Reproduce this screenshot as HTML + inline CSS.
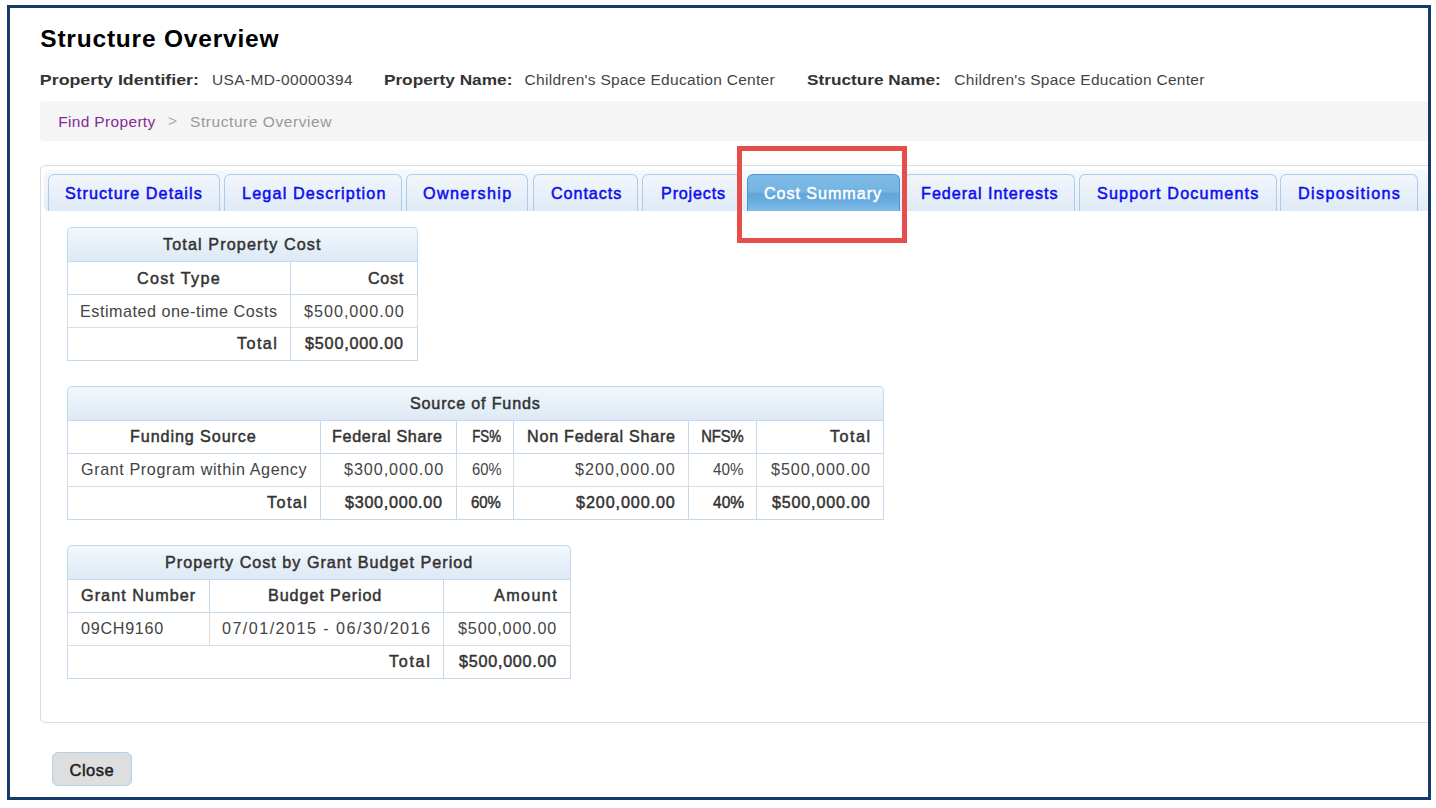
<!DOCTYPE html>
<html><head><meta charset="utf-8"><title>Structure Overview</title>
<style>
html,body{margin:0;padding:0;background:#fff}
body{width:1436px;height:808px;overflow:hidden;position:relative;font-family:"Liberation Sans",sans-serif}
#clip{position:absolute;left:0;top:0;width:1428px;height:797px;overflow:hidden}
.t{position:absolute;white-space:nowrap;line-height:24px;font-family:"Liberation Sans",sans-serif}
#frame{position:absolute;left:7px;top:5px;width:1424px;height:795px;box-sizing:border-box;border:3px solid #163a6b}
#red{position:absolute;left:737px;top:146px;width:170px;height:97px;box-sizing:border-box;border:5px solid #e54e4a}
</style></head><body>
<div id="clip">
<div style="position:absolute;left:40px;top:101px;width:1420px;height:40px;background:#f5f5f5;border-radius:4px"></div>
<div style="position:absolute;left:40px;top:165px;width:1420px;height:558px;box-sizing:border-box;border:1px solid #dddddd;border-radius:5px;background:#fff"></div>
<div style="position:absolute;left:44px;top:170px;width:1420px;height:41px;background:linear-gradient(to bottom,#f6f9fc 0%,#e3edf7 100%);border-radius:4px 0 0 4px"></div>
<div style="position:absolute;left:48px;top:174px;width:172px;height:37px;box-sizing:border-box;border:1px solid #adcbe7;border-bottom:none;border-radius:6px 6px 0 0;background:linear-gradient(to bottom,#f1f6fb 0%,#dfeaf5 100%)"></div>
<div style="position:absolute;left:224px;top:174px;width:178px;height:37px;box-sizing:border-box;border:1px solid #adcbe7;border-bottom:none;border-radius:6px 6px 0 0;background:linear-gradient(to bottom,#f1f6fb 0%,#dfeaf5 100%)"></div>
<div style="position:absolute;left:406px;top:174px;width:122px;height:37px;box-sizing:border-box;border:1px solid #adcbe7;border-bottom:none;border-radius:6px 6px 0 0;background:linear-gradient(to bottom,#f1f6fb 0%,#dfeaf5 100%)"></div>
<div style="position:absolute;left:533px;top:174px;width:105px;height:37px;box-sizing:border-box;border:1px solid #adcbe7;border-bottom:none;border-radius:6px 6px 0 0;background:linear-gradient(to bottom,#f1f6fb 0%,#dfeaf5 100%)"></div>
<div style="position:absolute;left:642px;top:174px;width:100px;height:37px;box-sizing:border-box;border:1px solid #adcbe7;border-bottom:none;border-radius:6px 6px 0 0;background:linear-gradient(to bottom,#f1f6fb 0%,#dfeaf5 100%)"></div>
<div style="position:absolute;left:747px;top:174px;width:153px;height:37px;box-sizing:border-box;border:1px solid #4e96d8;border-bottom:none;border-radius:6px 6px 0 0;background:linear-gradient(to bottom,#7fbbe7 0%,#74b3e2 48%,#5fa6dc 50%,#6aaddf 75%,#80bde8 100%)"></div>
<div style="position:absolute;left:904px;top:174px;width:171px;height:37px;box-sizing:border-box;border:1px solid #adcbe7;border-bottom:none;border-radius:6px 6px 0 0;background:linear-gradient(to bottom,#f1f6fb 0%,#dfeaf5 100%)"></div>
<div style="position:absolute;left:1079px;top:174px;width:198px;height:37px;box-sizing:border-box;border:1px solid #adcbe7;border-bottom:none;border-radius:6px 6px 0 0;background:linear-gradient(to bottom,#f1f6fb 0%,#dfeaf5 100%)"></div>
<div style="position:absolute;left:1280px;top:174px;width:138px;height:37px;box-sizing:border-box;border:1px solid #adcbe7;border-bottom:none;border-radius:6px 6px 0 0;background:linear-gradient(to bottom,#f1f6fb 0%,#dfeaf5 100%)"></div>
<div style="position:absolute;left:67px;top:227px;width:351px;height:34px;box-sizing:border-box;border:1px solid #c3d9ee;border-bottom:none;border-radius:5px 5px 0 0;background:linear-gradient(to bottom,#f4f8fc 0%,#e9f1f9 45%,#dde9f5 100%)"></div>
<div style="position:absolute;left:67px;top:261px;width:351px;height:1px;background:#c3d9ee"></div>
<div style="position:absolute;left:67px;top:261px;width:1px;height:34px;background:#c3d9ee"></div>
<div style="position:absolute;left:290px;top:261px;width:1px;height:34px;background:#c3d9ee"></div>
<div style="position:absolute;left:417px;top:261px;width:1px;height:34px;background:#c3d9ee"></div>
<div style="position:absolute;left:67px;top:294px;width:351px;height:1px;background:#c3d9ee"></div>
<div style="position:absolute;left:67px;top:295px;width:1px;height:33px;background:#dddddd"></div>
<div style="position:absolute;left:290px;top:295px;width:1px;height:33px;background:#dddddd"></div>
<div style="position:absolute;left:417px;top:295px;width:1px;height:33px;background:#dddddd"></div>
<div style="position:absolute;left:67px;top:327px;width:351px;height:1px;background:#dddddd"></div>
<div style="position:absolute;left:67px;top:328px;width:1px;height:33px;background:#c3d9ee"></div>
<div style="position:absolute;left:290px;top:328px;width:1px;height:33px;background:#c3d9ee"></div>
<div style="position:absolute;left:417px;top:328px;width:1px;height:33px;background:#c3d9ee"></div>
<div style="position:absolute;left:67px;top:360px;width:351px;height:1px;background:#c3d9ee"></div>
<div style="position:absolute;left:67px;top:386px;width:817px;height:34px;box-sizing:border-box;border:1px solid #c3d9ee;border-bottom:none;border-radius:5px 5px 0 0;background:linear-gradient(to bottom,#f4f8fc 0%,#e9f1f9 45%,#dde9f5 100%)"></div>
<div style="position:absolute;left:67px;top:420px;width:817px;height:1px;background:#c3d9ee"></div>
<div style="position:absolute;left:67px;top:420px;width:1px;height:34px;background:#c3d9ee"></div>
<div style="position:absolute;left:320px;top:420px;width:1px;height:34px;background:#c3d9ee"></div>
<div style="position:absolute;left:456px;top:420px;width:1px;height:34px;background:#c3d9ee"></div>
<div style="position:absolute;left:513px;top:420px;width:1px;height:34px;background:#c3d9ee"></div>
<div style="position:absolute;left:688px;top:420px;width:1px;height:34px;background:#c3d9ee"></div>
<div style="position:absolute;left:756px;top:420px;width:1px;height:34px;background:#c3d9ee"></div>
<div style="position:absolute;left:883px;top:420px;width:1px;height:34px;background:#c3d9ee"></div>
<div style="position:absolute;left:67px;top:453px;width:817px;height:1px;background:#c3d9ee"></div>
<div style="position:absolute;left:67px;top:454px;width:1px;height:33px;background:#dddddd"></div>
<div style="position:absolute;left:320px;top:454px;width:1px;height:33px;background:#dddddd"></div>
<div style="position:absolute;left:456px;top:454px;width:1px;height:33px;background:#dddddd"></div>
<div style="position:absolute;left:513px;top:454px;width:1px;height:33px;background:#dddddd"></div>
<div style="position:absolute;left:688px;top:454px;width:1px;height:33px;background:#dddddd"></div>
<div style="position:absolute;left:756px;top:454px;width:1px;height:33px;background:#dddddd"></div>
<div style="position:absolute;left:883px;top:454px;width:1px;height:33px;background:#dddddd"></div>
<div style="position:absolute;left:67px;top:486px;width:817px;height:1px;background:#dddddd"></div>
<div style="position:absolute;left:67px;top:487px;width:1px;height:33px;background:#c3d9ee"></div>
<div style="position:absolute;left:320px;top:487px;width:1px;height:33px;background:#c3d9ee"></div>
<div style="position:absolute;left:456px;top:487px;width:1px;height:33px;background:#c3d9ee"></div>
<div style="position:absolute;left:513px;top:487px;width:1px;height:33px;background:#c3d9ee"></div>
<div style="position:absolute;left:688px;top:487px;width:1px;height:33px;background:#c3d9ee"></div>
<div style="position:absolute;left:756px;top:487px;width:1px;height:33px;background:#c3d9ee"></div>
<div style="position:absolute;left:883px;top:487px;width:1px;height:33px;background:#c3d9ee"></div>
<div style="position:absolute;left:67px;top:519px;width:817px;height:1px;background:#c3d9ee"></div>
<div style="position:absolute;left:67px;top:545px;width:504px;height:34px;box-sizing:border-box;border:1px solid #c3d9ee;border-bottom:none;border-radius:5px 5px 0 0;background:linear-gradient(to bottom,#f4f8fc 0%,#e9f1f9 45%,#dde9f5 100%)"></div>
<div style="position:absolute;left:67px;top:579px;width:504px;height:1px;background:#c3d9ee"></div>
<div style="position:absolute;left:67px;top:579px;width:1px;height:34px;background:#c3d9ee"></div>
<div style="position:absolute;left:209px;top:579px;width:1px;height:34px;background:#c3d9ee"></div>
<div style="position:absolute;left:443px;top:579px;width:1px;height:34px;background:#c3d9ee"></div>
<div style="position:absolute;left:570px;top:579px;width:1px;height:34px;background:#c3d9ee"></div>
<div style="position:absolute;left:67px;top:612px;width:504px;height:1px;background:#c3d9ee"></div>
<div style="position:absolute;left:67px;top:613px;width:1px;height:33px;background:#dddddd"></div>
<div style="position:absolute;left:209px;top:613px;width:1px;height:33px;background:#dddddd"></div>
<div style="position:absolute;left:443px;top:613px;width:1px;height:33px;background:#dddddd"></div>
<div style="position:absolute;left:570px;top:613px;width:1px;height:33px;background:#dddddd"></div>
<div style="position:absolute;left:67px;top:645px;width:504px;height:1px;background:#dddddd"></div>
<div style="position:absolute;left:67px;top:646px;width:1px;height:33px;background:#c3d9ee"></div>
<div style="position:absolute;left:443px;top:646px;width:1px;height:33px;background:#c3d9ee"></div>
<div style="position:absolute;left:570px;top:646px;width:1px;height:33px;background:#c3d9ee"></div>
<div style="position:absolute;left:67px;top:678px;width:504px;height:1px;background:#c3d9ee"></div>
<div style="position:absolute;left:52px;top:752px;width:80px;height:34px;box-sizing:border-box;border:1px solid #b4d0e8;border-radius:6px;background:#dedede"></div>
<div class="t" id="t0" style="left:40.28px;top:27px;font-size:24.5px;letter-spacing:0.798px;color:#000;font-weight:bold">Structure Overview</div>
<div class="t" id="t1" style="left:40.46px;top:68px;font-size:15.5px;letter-spacing:0.000px;color:#333;transform:scaleX(1.1471);transform-origin:1.00px 0;font-weight:bold">Property Identifier:</div>
<div class="t" id="t2" style="left:212.00px;top:68px;font-size:15.5px;letter-spacing:0.381px;color:#444444">USA-MD-00000394</div>
<div class="t" id="t3" style="left:384.42px;top:68px;font-size:15.5px;letter-spacing:0.000px;color:#333;transform:scaleX(1.1133);transform-origin:1.00px 0;font-weight:bold">Property Name:</div>
<div class="t" id="t4" style="left:524.54px;top:68px;font-size:15.5px;letter-spacing:0.292px;color:#444444">Children's Space Education Center</div>
<div class="t" id="t5" style="left:806.52px;top:68px;font-size:15.5px;letter-spacing:0.000px;color:#333;transform:scaleX(1.1098);transform-origin:0.00px 0;font-weight:bold">Structure Name:</div>
<div class="t" id="t6" style="left:954.26px;top:68px;font-size:15.5px;letter-spacing:0.294px;color:#444444">Children's Space Education Center</div>
<div class="t" id="t7" style="left:58.22px;top:110px;font-size:15.5px;letter-spacing:0.334px;color:#862a96">Find Property</div>
<div class="t" id="t8" style="left:168.00px;top:109px;font-size:15.5px;letter-spacing:0.000px;color:#aaa">&gt;</div>
<div class="t" id="t9" style="left:190.04px;top:110px;font-size:15.5px;letter-spacing:0.563px;color:#999">Structure Overview</div>
<div class="t" id="t10" style="left:65.00px;top:182px;font-size:17px;letter-spacing:1.143px;color:#0c0cee;transform:scaleX(0.9500);transform-origin:0.00px 0;-webkit-text-stroke:0.5px #0c0cee">Structure Details</div>
<div class="t" id="t11" style="left:241.66px;top:182px;font-size:17px;letter-spacing:1.227px;color:#0c0cee;transform:scaleX(0.9500);transform-origin:1.00px 0;-webkit-text-stroke:0.5px #0c0cee">Legal Description</div>
<div class="t" id="t12" style="left:423.24px;top:182px;font-size:17px;letter-spacing:1.452px;color:#0c0cee;transform:scaleX(0.9500);transform-origin:0.00px 0;-webkit-text-stroke:0.5px #0c0cee">Ownership</div>
<div class="t" id="t13" style="left:550.74px;top:182px;font-size:17px;letter-spacing:0.981px;color:#0c0cee;transform:scaleX(0.9500);transform-origin:0.00px 0;-webkit-text-stroke:0.5px #0c0cee">Contacts</div>
<div class="t" id="t14" style="left:660.68px;top:182px;font-size:17px;letter-spacing:0.855px;color:#0c0cee;transform:scaleX(0.9500);transform-origin:1.00px 0;-webkit-text-stroke:0.5px #0c0cee">Projects</div>
<div class="t" id="t15" style="left:764.02px;top:182px;font-size:17px;letter-spacing:0.981px;color:#fff;transform:scaleX(0.9500);transform-origin:0.00px 0;-webkit-text-stroke:0.5px #fff">Cost Summary</div>
<div class="t" id="t16" style="left:921.18px;top:182px;font-size:17px;letter-spacing:1.011px;color:#0c0cee;transform:scaleX(0.9500);transform-origin:1.00px 0;-webkit-text-stroke:0.5px #0c0cee">Federal Interests</div>
<div class="t" id="t17" style="left:1096.98px;top:182px;font-size:17px;letter-spacing:1.221px;color:#0c0cee;transform:scaleX(0.9500);transform-origin:0.00px 0;-webkit-text-stroke:0.5px #0c0cee">Support Documents</div>
<div class="t" id="t18" style="left:1297.92px;top:182px;font-size:17px;letter-spacing:1.410px;color:#0c0cee;transform:scaleX(0.9500);transform-origin:1.00px 0;-webkit-text-stroke:0.5px #0c0cee">Dispositions</div>
<div class="t" id="t19" style="left:163.00px;top:233px;font-size:17px;letter-spacing:1.182px;color:#333333;transform:scaleX(0.9500);transform-origin:0.00px 0;-webkit-text-stroke:0.5px #333333">Total Property Cost</div>
<div class="t" id="t20" style="left:137.02px;top:267px;font-size:17px;letter-spacing:1.345px;color:#333333;transform:scaleX(0.9500);transform-origin:0.00px 0;-webkit-text-stroke:0.5px #333333">Cost Type</div>
<div class="t" id="t21" style="left:367.76px;top:267px;font-size:17px;letter-spacing:0.726px;color:#333333;transform:scaleX(0.9500);transform-origin:0.00px 0;-webkit-text-stroke:0.5px #333333">Cost</div>
<div class="t" id="t22" style="left:79.74px;top:300px;font-size:17px;letter-spacing:0.551px;color:#444444;transform:scaleX(0.9500);transform-origin:1.00px 0">Estimated one-time Costs</div>
<div class="t" id="t23" style="left:304.02px;top:300px;font-size:17px;letter-spacing:1.042px;color:#444444;transform:scaleX(0.9500);transform-origin:0.00px 0">$500,000.00</div>
<div class="t" id="t24" style="left:236.50px;top:332px;font-size:17px;letter-spacing:1.496px;color:#333333;transform:scaleX(0.9500);transform-origin:0.00px 0;-webkit-text-stroke:0.5px #333333">Total</div>
<div class="t" id="t25" style="left:305.02px;top:332px;font-size:17px;letter-spacing:0.863px;color:#333333;transform:scaleX(0.9500);transform-origin:0.00px 0;-webkit-text-stroke:0.5px #333333">$500,000.00</div>
<div class="t" id="t26" style="left:409.50px;top:392px;font-size:17px;letter-spacing:0.849px;color:#333333;transform:scaleX(0.9500);transform-origin:0.00px 0;-webkit-text-stroke:0.5px #333333">Source of Funds</div>
<div class="t" id="t27" style="left:130.44px;top:425px;font-size:17px;letter-spacing:0.949px;color:#333333;transform:scaleX(0.9500);transform-origin:1.00px 0;-webkit-text-stroke:0.5px #333333">Funding Source</div>
<div class="t" id="t28" style="left:332.44px;top:425px;font-size:17px;letter-spacing:0.670px;color:#333333;transform:scaleX(0.9500);transform-origin:1.00px 0;-webkit-text-stroke:0.5px #333333">Federal Share</div>
<div class="t" id="t29" style="left:471.92px;top:425px;font-size:17px;letter-spacing:0.000px;color:#333333;transform:scaleX(0.7855);transform-origin:1.00px 0;-webkit-text-stroke:0.5px #333333">FS%</div>
<div class="t" id="t30" style="left:526.70px;top:425px;font-size:17px;letter-spacing:0.760px;color:#333333;transform:scaleX(0.9500);transform-origin:1.00px 0;-webkit-text-stroke:0.5px #333333">Non Federal Share</div>
<div class="t" id="t31" style="left:700.70px;top:425px;font-size:17px;letter-spacing:0.000px;color:#333333;transform:scaleX(0.8667);transform-origin:1.00px 0;-webkit-text-stroke:0.5px #333333">NFS%</div>
<div class="t" id="t32" style="left:829.52px;top:425px;font-size:17px;letter-spacing:1.559px;color:#333333;transform:scaleX(0.9500);transform-origin:0.00px 0;-webkit-text-stroke:0.5px #333333">Total</div>
<div class="t" id="t33" style="left:80.50px;top:458px;font-size:17px;letter-spacing:0.629px;color:#444444;transform:scaleX(0.9500);transform-origin:0.00px 0">Grant Program within Agency</div>
<div class="t" id="t34" style="left:343.98px;top:458px;font-size:17px;letter-spacing:0.987px;color:#444444;transform:scaleX(0.9500);transform-origin:0.00px 0">$300,000.00</div>
<div class="t" id="t35" style="left:471.50px;top:458px;font-size:17px;letter-spacing:0.000px;color:#444444;transform:scaleX(0.8700);transform-origin:0.00px 0">60%</div>
<div class="t" id="t36" style="left:575.02px;top:458px;font-size:17px;letter-spacing:1.044px;color:#444444;transform:scaleX(0.9500);transform-origin:0.00px 0">$200,000.00</div>
<div class="t" id="t37" style="left:713.02px;top:458px;font-size:17px;letter-spacing:0.000px;color:#444444;transform:scaleX(0.8930);transform-origin:0.00px 0">40%</div>
<div class="t" id="t38" style="left:770.98px;top:458px;font-size:17px;letter-spacing:0.964px;color:#444444;transform:scaleX(0.9500);transform-origin:0.00px 0">$500,000.00</div>
<div class="t" id="t39" style="left:266.98px;top:491px;font-size:17px;letter-spacing:1.496px;color:#333333;transform:scaleX(0.9500);transform-origin:0.00px 0;-webkit-text-stroke:0.5px #333333">Total</div>
<div class="t" id="t40" style="left:345.48px;top:491px;font-size:17px;letter-spacing:0.756px;color:#333333;transform:scaleX(0.9500);transform-origin:0.00px 0;-webkit-text-stroke:0.5px #333333">$300,000.00</div>
<div class="t" id="t41" style="left:470.50px;top:491px;font-size:17px;letter-spacing:0.000px;color:#333333;transform:scaleX(0.8782);transform-origin:0.00px 0;-webkit-text-stroke:0.5px #333333">60%</div>
<div class="t" id="t42" style="left:576.00px;top:491px;font-size:17px;letter-spacing:0.941px;color:#333333;transform:scaleX(0.9500);transform-origin:0.00px 0;-webkit-text-stroke:0.5px #333333">$200,000.00</div>
<div class="t" id="t43" style="left:713.00px;top:491px;font-size:17px;letter-spacing:0.000px;color:#333333;transform:scaleX(0.9142);transform-origin:0.00px 0;-webkit-text-stroke:0.5px #333333">40%</div>
<div class="t" id="t44" style="left:771.50px;top:491px;font-size:17px;letter-spacing:0.836px;color:#333333;transform:scaleX(0.9500);transform-origin:0.00px 0;-webkit-text-stroke:0.5px #333333">$500,000.00</div>
<div class="t" id="t45" style="left:164.70px;top:551px;font-size:17px;letter-spacing:1.059px;color:#333333;transform:scaleX(0.9500);transform-origin:1.00px 0;-webkit-text-stroke:0.5px #333333">Property Cost by Grant Budget Period</div>
<div class="t" id="t46" style="left:80.74px;top:584px;font-size:17px;letter-spacing:1.135px;color:#333333;transform:scaleX(0.9500);transform-origin:0.00px 0;-webkit-text-stroke:0.5px #333333">Grant Number</div>
<div class="t" id="t47" style="left:268.46px;top:584px;font-size:17px;letter-spacing:0.955px;color:#333333;transform:scaleX(0.9500);transform-origin:1.00px 0;-webkit-text-stroke:0.5px #333333">Budget Period</div>
<div class="t" id="t48" style="left:493.50px;top:584px;font-size:17px;letter-spacing:1.495px;color:#333333;transform:scaleX(0.9500);transform-origin:0.00px 0;-webkit-text-stroke:0.5px #333333">Amount</div>
<div class="t" id="t49" style="left:80.74px;top:617px;font-size:17px;letter-spacing:0.748px;color:#444444;transform:scaleX(0.9500);transform-origin:0.00px 0">09CH9160</div>
<div class="t" id="t50" style="left:221.76px;top:617px;font-size:17px;letter-spacing:1.527px;color:#444444;transform:scaleX(0.9500);transform-origin:0.00px 0">07/01/2015 - 06/30/2016</div>
<div class="t" id="t51" style="left:458.02px;top:617px;font-size:17px;letter-spacing:0.886px;color:#444444;transform:scaleX(0.9500);transform-origin:0.00px 0">$500,000.00</div>
<div class="t" id="t52" style="left:388.52px;top:650px;font-size:17px;letter-spacing:1.754px;color:#333333;transform:scaleX(0.9500);transform-origin:0.00px 0;-webkit-text-stroke:0.5px #333333">Total</div>
<div class="t" id="t53" style="left:459.00px;top:650px;font-size:17px;letter-spacing:0.783px;color:#333333;transform:scaleX(0.9500);transform-origin:0.00px 0;-webkit-text-stroke:0.5px #333333">$500,000.00</div>
<div class="t" id="t54" style="left:69.50px;top:758px;font-size:16.5px;letter-spacing:0.503px;color:#222;-webkit-text-stroke:0.5px #222">Close</div>
</div>
<div id="red"></div>
<div id="frame"></div>
</body></html>
